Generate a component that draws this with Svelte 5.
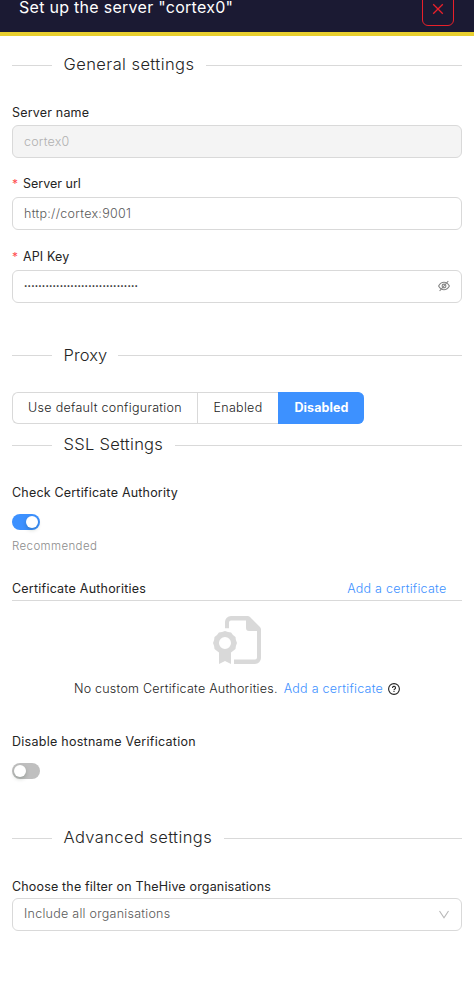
<script>
  const dots = '•'.repeat(32);
  let checkAuthority = $state(true);
  let disableHostname = $state(false);
  let proxy = $state('Disabled');
</script>

{#snippet divider(title, cls)}
  <div class="divider"><span class="lead"></span><h2 class={cls}>{title}</h2><span class="rest"></span></div>
{/snippet}

<div class="drawer">
  <header>
    <h1>Set up the server "cortex0"</h1>
    <button class="close" aria-label="Close">
      <svg width="12" height="12" viewBox="0 0 12 12"><path d="M1.2 1.2 10.8 10.8M10.8 1.2 1.2 10.8" fill="none" stroke="#e9202a" stroke-width="1.3" /></svg>
    </button>
  </header>

  <main>
    {@render divider('General settings', 'general')}
    <div class="field name">
      <div class="label"><span class="t-name">Server name</span></div>
      <div class="input disabled"><span class="t-cortex">cortex0</span></div>
    </div>
    <div class="field url">
      <div class="label"><i>*</i><span class="t-surl">Server url</span></div>
      <div class="input"><span class="t-http">http://cortex:9001</span></div>
    </div>
    <div class="field key">
      <div class="label"><i>*</i><span class="t-api">API Key</span></div>
      <div class="input">
        <span class="dots">{dots}</span>
        <svg class="eye" width="12" height="12" viewBox="0 0 12 12" fill="none" stroke="#858585" stroke-width="1.1">
          <path d="M.6 6C2 3.5 3.8 2.3 6 2.3S10 3.500 11.400 6C10 8.500 8.200 9.700 6 9.700S2 8.500.6 6Z" /><circle cx="6" cy="6" r="1.900" /><path d="M1.600 11 10.300 1" />
        </svg>
      </div>
    </div>

    <section class="proxy">
      {@render divider('Proxy', 'prox')}
      <div class="group">
        {#each ['Use default configuration', 'Enabled', 'Disabled'] as option, i}
          <button class="option o{i}" class:active={proxy === option} onclick={() => (proxy = option)}><span>{option}</span></button>
        {/each}
      </div>
    </section>

    <section class="ssl">
      {@render divider('SSL Settings', 'sslt')}
      <div class="label check"><span class="t-check">Check Certificate Authority</span></div>
      <button class="switch" class:on={checkAuthority} aria-label="Check Certificate Authority" onclick={() => (checkAuthority = !checkAuthority)}><b></b></button>
      <div class="hint"><span>Recommended</span></div>
      <div class="authorities">
        <span class="t-auth">Certificate Authorities</span>
        <a href="#add" class="add">Add a certificate</a>
      </div>
      <div class="empty">
        <svg width="48" height="48" viewBox="0 0 48 48" fill="#d9d9d9">
          <path d="M12 12.300V6a6 6 0 0 1 6-6H34.500Q36 0 37 1L47 11Q48 12 48 13.500V42a6 6 0 0 1-6 6H21V43.500H42a2 2 0 0 0 2-2V15H36a3 3 0 0 1-3-3V4.500H18a2 2 0 0 0-2 2v5.800Z" />
          <path fill-rule="evenodd" d="M12 15 15 16.100 18.100 16.500 20 19 22.500 20.900 22.900 24 24 27 22.900 30 22.500 33.100 20 35 18 36.600V48L12 45 6 48V36.600L4 35 1.500 33.100 1.100 30 0 27 1.100 24 1.500 20.900 4 19 5.900 16.500 9 16.100ZM12 21a6 6 0 1 0 0 12 6 6 0 0 0 0-12Z" />
        </svg>
        <p><span class="t-no">No custom Certificate Authorities.</span><a href="#add" class="add">Add a certificate</a>
          <svg class="help" width="12" height="12" viewBox="0 0 12 12" fill="none" stroke="#222" stroke-width="1.100"><circle cx="6" cy="6" r="5.400" /><path d="M4.500 4.900a1.500 1.500 0 1 1 2.300 1.200Q6 6.500 6 7.200M6 8v1.100" /></svg>
        </p>
      </div>
      <div class="label host"><span class="t-host">Disable hostname Verification</span></div>
      <button class="switch" class:on={disableHostname} aria-label="Disable hostname Verification" onclick={() => (disableHostname = !disableHostname)}><b></b></button>
    </section>

    <section class="advanced">
      {@render divider('Advanced settings', 'adv')}
      <div class="label choose"><span class="t-choose">Choose the filter on TheHive organisations</span></div>
      <div class="input select"><span class="t-inc">Include all organisations</span>
        <svg width="12" height="12" viewBox="0 0 12 12"><path d="M1.500 2 6 8.800 10.500 2" fill="none" stroke="#b8b8b8" stroke-width="1.100" /></svg>
      </div>
    </section>
  </main>
</div>

<style>
  :global(body) { background: #fff; }
  .drawer { height: 993px; background: #fff; color: #242424; font: 12.5px/20px Inter, sans-serif; white-space: nowrap; }
  .drawer * { box-sizing: border-box; }
  header { height: 36px; display: flex; justify-content: space-between; align-items: flex-start; padding: 0 20px 0 19px; background: #1b1a33; border-bottom: 4px solid #e8cf2e; }
  h1 { margin: 0; font-size: 16px; line-height: 14px; font-weight: 400; color: #fff; letter-spacing: .28px; }
  button { font: inherit; color: inherit; padding: 0; margin: 0; }
  .close { width: 32px; height: 32px; margin-top: -6px; border: 1px solid #e9202a; border-radius: 6px; background: none; display: flex; align-items: center; justify-content: center; }
  .close svg { margin-top: -3px; }
  main { padding: 18px 12px 0; }
  .divider { display: flex; align-items: center; height: 22px; }
  .divider h2 { margin: -2px 12px 0 11.5px; font-size: 16.5px; line-height: 20px; font-weight: 300; }
  .general { letter-spacing: .42px; }
  .prox { letter-spacing: .1px; }
  .sslt { letter-spacing: .28px; }
  .adv { letter-spacing: .4px; }
  .proxy .divider h2 { margin: 0 11px 0 11.5px; }
  .lead { width: 40px; height: 1px; background: #d9d9d9; }
  .rest { flex: 1; height: 1px; background: #d9d9d9; }
  .field.name { margin-top: 26px; }
  .field.url { margin-top: 15px; }
  .field.key { margin-top: 16px; }
  .label { height: 24px; line-height: 22px; }
  .name .label { height: 23px; }
  .label i { font-style: normal; color: #ff4d4f; margin-right: 4px; font-size: 12px; display: inline-block; width: 7px; line-height: 20px; }
  .input { display: flex; justify-content: space-between; align-items: center; height: 33px; border: 1px solid #d9d9d9; border-radius: 6px; padding: 0 11px; color: #595959; font-weight: 300; }
  .disabled { background: #f4f4f4; color: #b0b0b0; }
  .t-name { letter-spacing: .19px; }
  .t-cortex { letter-spacing: .2px; }
  .t-http { letter-spacing: .29px; }
  .t-api { letter-spacing: .13px; }
  .t-check { letter-spacing: .19px; }
  .t-auth { letter-spacing: .22px; }
  .t-no { letter-spacing: .24px; }
  .t-host { letter-spacing: .27px; }
  .t-choose { letter-spacing: .17px; }
  .t-inc { letter-spacing: .26px; line-height: 18px; margin-top: -2px; }
  .dots { color: #222; font-size: 6px; font-weight: 400; letter-spacing: .19px; margin-top: -1px; }
  .eye { margin-top: -2px; }
  .proxy { margin-top: 41px; }
  .group { display: flex; margin-top: 26px; height: 32px; }
  .option { border: 1px solid #d9d9d9; border-right: 0; background: #fff; width: 185px; letter-spacing: .29px; font-weight: 350; }
  .o0 { border-radius: 6px 0 0 6px; }
  .o1 { width: 81px; }
  .o2 { width: 86px; border-radius: 0 6px 6px 0; }
  .active { background: #3d91ff; border-color: #3d91ff; color: #fff; font-weight: 700; letter-spacing: .12px; }
  .ssl { margin-top: 10px; }
  .check { margin-top: 26px; height: 32px; }
  .switch { display: block; width: 28px; height: 16px; border: 0; border-radius: 8px; background: #bfbfbf; padding: 2px; }
  .switch b { display: block; width: 12px; height: 12px; border-radius: 50%; background: #fff; box-shadow: 0 2px 4px rgba(0, 35, 11, .2); }
  .switch.on { background: #3d91ff; }
  .switch.on b { margin-left: 12px; }
  .hint { margin-top: 6px; color: #8c8c8c; font-size: 11.5px; font-weight: 300; letter-spacing: .38px; height: 20px; }
  .authorities { margin-top: 22px; height: 23px; line-height: 22px; display: flex; justify-content: space-between; border-bottom: 1px solid #d9d9d9; padding-right: 15.5px; }
  a { color: #3d91ff; text-decoration: none; font-weight: 350; letter-spacing: .26px; }
  .empty { display: flex; flex-direction: column; align-items: center; padding-top: 15px; }
  .empty p { display: flex; align-items: center; height: 20px; margin: 15px 0 0; font-weight: 350; }
  .empty a { margin: 0 5px 0 6px; }
  .host { margin-top: 32px; height: 32px; }
  .advanced { margin-top: 48px; }
  .choose { margin-top: 27px; height: 22px; }
  .select svg { margin-top: 1px; }
</style>
